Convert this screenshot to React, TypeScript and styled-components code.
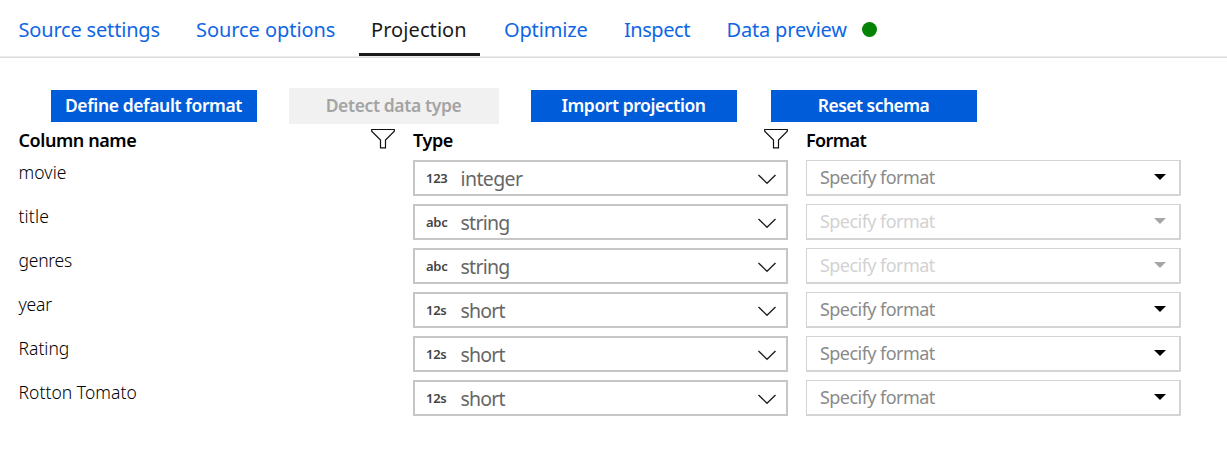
import React from 'react';
import styled, { createGlobalStyle } from 'styled-components';

const GlobalStyle = createGlobalStyle`
  * { box-sizing: border-box; }
  body {
    margin: 0;
    background: #fff;
    color: #000;
    font-family: "Segoe UI", "Noto Sans", "Open Sans", sans-serif;
  }
`;

const Page = styled.div`
  width: 1227px;
  height: 468px;
  overflow: hidden;
`;

const TabBar = styled.nav`
  display: flex;
  height: 58px;
  padding-left: 6.5px;
  border-bottom: 1px solid #dcdcdc;
  box-shadow: inset 0 -1px 0 #ececec;
`;

const Tab = styled.a<{ $width: number; $spacing: number; $active?: boolean }>`
  display: flex;
  align-items: center;
  gap: 15px;
  width: ${(p) => p.$width}px;
  height: 56px;
  margin-right: 12px;
  padding: 6px 0 0 12px;
  border-bottom: 3px solid ${(p) => (p.$active ? '#1b1a19' : 'transparent')};
  color: ${(p) => (p.$active ? '#1b1a19' : '#0f66e4')};
  font-size: 20px;
  line-height: 28px;
  letter-spacing: ${(p) => p.$spacing}px;
  white-space: nowrap;
`;

const StatusDot = styled.span`
  width: 15px;
  height: 15px;
  border-radius: 50%;
  background: #058305;
`;

const Toolbar = styled.div`
  display: flex;
  align-items: center;
  height: 36px;
  margin: 30px 0 0 51px;
`;

const Button = styled.button<{ $gap: number; $spacing: number }>`
  width: 206px;
  height: 32px;
  margin: 0 ${(p) => p.$gap}px 0 0;
  padding: 0 1px 2px 0;
  border: 0;
  background: #015cda;
  color: #fff;
  font: 600 17.5px/28px "Segoe UI", "Noto Sans", "Open Sans", sans-serif;
  letter-spacing: ${(p) => p.$spacing}px;
  white-space: nowrap;

  &:disabled {
    width: 210px;
    height: 36px;
    background: #f1f1f1;
    color: #a4a4a4;
  }
`;

const Grid = styled.div`
  display: grid;
  grid-template-columns: 376.5px 375px 375px;
  column-gap: 18px;
  padding-left: 18.5px;
`;

const HeaderCell = styled.div<{ $spacing: number }>`
  display: flex;
  justify-content: space-between;
  height: 36px;
  padding-top: 3px;
  font-size: 18px;
  font-weight: 600;
  line-height: 26px;
  letter-spacing: ${(p) => p.$spacing}px;
`;

const ColumnName = styled.div<{ $spacing: number }>`
  height: 45px;
  margin-top: -1px;
  font-size: 17.5px;
  font-weight: 300;
  line-height: 26px;
  color: #000;
  letter-spacing: ${(p) => p.$spacing}px;
`;

const TypeSelect = styled.div`
  display: flex;
  align-items: center;
  height: 36px;
  padding: 2px 9px 0 11px;
  border: 2px solid #c6c6c6;
`;

const TypeGlyph = styled.span<{ $spacing: number }>`
  width: 34.5px;
  padding-bottom: 3px;
  color: #444;
  font-size: 13px;
  font-weight: 600;
  letter-spacing: ${(p) => p.$spacing}px;
`;

const TypeLabel = styled.span<{ $spacing: number }>`
  flex: 1;
  color: #666;
  font-size: 19.5px;
  line-height: 28px;
  letter-spacing: ${(p) => p.$spacing}px;
`;

const FormatSelect = styled.div<{ $disabled?: boolean }>`
  display: flex;
  align-items: center;
  justify-content: space-between;
  height: 36px;
  padding: 0 13px 1px;
  border: solid #d4d4d4;
  border-width: 1px 2px 2px 1px;
  color: ${(p) => (p.$disabled ? '#d2d2d2' : '#8a8a8a')};
  font-size: 18px;
  line-height: 26px;
  letter-spacing: -0.55px;
`;

const Caret = styled.svg<{ $disabled?: boolean }>`
  fill: ${(p) => (p.$disabled ? '#a6a6a6' : '#000')};
`;

const FilterIcon = () => (
  <svg width="24" height="22" viewBox="0 0 24 22" fill="none" stroke="#111" strokeWidth="1.2">
    <path d="M.7 2.5h22.6v1.8L14.5 13v7.8h-5V13L.7 4.3z" />
  </svg>
);

const Chevron = () => (
  <svg width="20" height="12" viewBox="0 0 20 12" fill="none" stroke="#222" strokeWidth="1.4">
    <path d="M1.5 2 10 10.2 18.5 2" />
  </svg>
);

const tabs = [
  { label: 'Source settings', width: 165.5, spacing: -0.18 },
  { label: 'Source options', width: 163, spacing: -0.06 },
  { label: 'Projection', width: 121, spacing: 0.08, active: true },
  { label: 'Optimize', width: 108, spacing: -0.15 },
  { label: 'Inspect', width: 90.5, spacing: -0.45 },
  { label: 'Data preview', width: 175, spacing: -0.17, dot: true },
];

const buttons = [
  { label: 'Define default format', gap: 32, spacing: -0.38 },
  { label: 'Detect data type', gap: 32, spacing: -0.38, disabled: true },
  { label: 'Import projection', gap: 34, spacing: -0.42 },
  { label: 'Reset schema', gap: 0, spacing: -0.53 },
];

const types = {
  integer: { glyph: '123', spacing: -0.6 },
  string: { glyph: 'abc', spacing: -0.75 },
  short: { glyph: '12s', spacing: -0.8 },
};

const rows: { name: string; spacing: number; type: keyof typeof types }[] = [
  { name: 'movie', spacing: 0.1, type: 'integer' },
  { name: 'title', spacing: 0.15, type: 'string' },
  { name: 'genres', spacing: -0.25, type: 'string' },
  { name: 'year', spacing: -0.2, type: 'short' },
  { name: 'Rating', spacing: 0, type: 'short' },
  { name: 'Rotton Tomato', spacing: 0.04, type: 'short' },
];

export default function App() {
  return (
    <Page>
      <GlobalStyle />
      <TabBar>
        {tabs.map((t) => (
          <Tab key={t.label} $width={t.width} $spacing={t.spacing} $active={t.active}>
            {t.label}
            {t.dot && <StatusDot />}
          </Tab>
        ))}
      </TabBar>
      <Toolbar>
        {buttons.map((b) => (
          <Button key={b.label} $gap={b.gap} $spacing={b.spacing} disabled={b.disabled}>
            {b.label}
          </Button>
        ))}
      </Toolbar>
      <Grid>
        <HeaderCell $spacing={-0.42}>Column name<FilterIcon /></HeaderCell>
        <HeaderCell $spacing={-0.4}>Type<FilterIcon /></HeaderCell>
        <HeaderCell $spacing={-0.6}>Format</HeaderCell>
        {rows.map((r) => {
          const type = types[r.type];
          const disabled = r.type === 'string';
          return (
            <React.Fragment key={r.name}>
              <ColumnName $spacing={r.spacing}>{r.name}</ColumnName>
              <TypeSelect>
                <TypeGlyph $spacing={-0.3}>{type.glyph}</TypeGlyph>
                <TypeLabel $spacing={type.spacing}>{r.type}</TypeLabel>
                <Chevron />
              </TypeSelect>
              <FormatSelect $disabled={disabled}>
                Specify format
                <Caret $disabled={disabled} width="12" height="6" viewBox="0 0 12 6">
                  <path d="M0 0h12L6 6z" />
                </Caret>
              </FormatSelect>
            </React.Fragment>
          );
        })}
      </Grid>
    </Page>
  );
}
